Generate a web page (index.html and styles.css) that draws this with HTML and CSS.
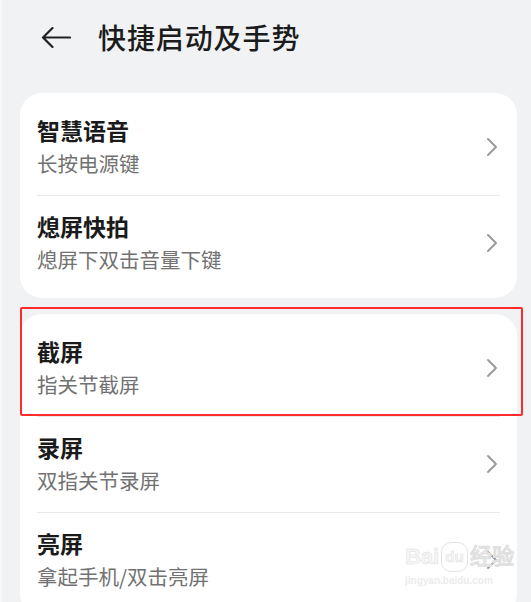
FILE: index.html
```html
<!DOCTYPE html>
<html lang="zh-CN">
<head>
<meta charset="utf-8">
<title>快捷启动及手势</title>
<link rel="stylesheet" href="styles.css">
</head>
<body>
<div class="page">
  <header class="header">
    <svg class="back" width="30" height="21" viewBox="0 0 30 21" aria-hidden="true">
      <path d="M29 10.5H2 M11.5 1L2 10.5L11.5 20" fill="none" stroke="#222" stroke-width="2.2" stroke-linecap="round" stroke-linejoin="round"/>
    </svg>
    <h1 class="title">快捷启动及手势</h1>
  </header>

  <section class="card">
    <div class="row">
      <div class="text">
        <div class="name">智慧语音</div>
        <div class="desc">长按电源键</div>
      </div>
      <svg class="chev" width="12" height="20" viewBox="0 0 12 20" aria-hidden="true"><path d="M2 2L10 10L2 18" fill="none" stroke="#9a9a9a" stroke-width="2" stroke-linecap="round" stroke-linejoin="round"/></svg>
    </div>
    <div class="row">
      <div class="text">
        <div class="name">熄屏快拍</div>
        <div class="desc">熄屏下双击音量下键</div>
      </div>
      <svg class="chev" width="12" height="20" viewBox="0 0 12 20" aria-hidden="true"><path d="M2 2L10 10L2 18" fill="none" stroke="#9a9a9a" stroke-width="2" stroke-linecap="round" stroke-linejoin="round"/></svg>
    </div>
  </section>

  <section class="card card-second">
    <div class="highlight"></div>
    <div class="row">
      <div class="text">
        <div class="name">截屏</div>
        <div class="desc">指关节截屏</div>
      </div>
      <svg class="chev" width="12" height="20" viewBox="0 0 12 20" aria-hidden="true"><path d="M2 2L10 10L2 18" fill="none" stroke="#9a9a9a" stroke-width="2" stroke-linecap="round" stroke-linejoin="round"/></svg>
    </div>
    <div class="row">
      <div class="text">
        <div class="name">录屏</div>
        <div class="desc">双指关节录屏</div>
      </div>
      <svg class="chev" width="12" height="20" viewBox="0 0 12 20" aria-hidden="true"><path d="M2 2L10 10L2 18" fill="none" stroke="#9a9a9a" stroke-width="2" stroke-linecap="round" stroke-linejoin="round"/></svg>
    </div>
    <div class="row">
      <div class="text">
        <div class="name">亮屏</div>
        <div class="desc">拿起手机/双击亮屏</div>
      </div>
      <svg class="chev" width="12" height="20" viewBox="0 0 12 20" aria-hidden="true"><path d="M2 2L10 10L2 18" fill="none" stroke="#9a9a9a" stroke-width="2" stroke-linecap="round" stroke-linejoin="round"/></svg>
    </div>
    <div class="watermark">
      <div class="wm-top"><span>Bai</span><span class="wm-paw">du</span><span>经验</span></div>
      <div class="wm-url">jingyan.baidu.com</div>
    </div>
  </section>
</div>
</body>
</html>
```

FILE: styles.css
```css
html, body {
  margin: 0;
  padding: 0;
}
body {
  background: #f1f2f4;
  font-family: "Noto Sans CJK SC", "Noto Sans", sans-serif;
  overflow: hidden;
}
.page {
  border-left: 2px solid #f8f8f9;
  padding: 0 14px 0 18px;
  height: 602px;
  box-sizing: border-box;
}
.header {
  height: 74px;
  display: flex;
  align-items: center;
  margin-bottom: 19px;
}
.back {
  display: block;
  margin-left: 21px;
  margin-top: 1px;
}
.title {
  margin: 0 0 0 27px;
  font-size: 28px;
  font-weight: 500;
  line-height: 36px;
  letter-spacing: 0.9px;
  color: #1c1c1c;
}
.card {
  background: #ffffff;
  border-radius: 22px;
  padding: 7px 17px;
}
.card-second {
  margin-top: 16px;
  position: relative;
}
.row {
  display: flex;
  align-items: center;
  height: 96px;
  box-sizing: border-box;
  border-bottom: 1px solid #e9e9e9;
}
.row:last-of-type {
  border-bottom: none;
  height: 95px;
}
.card-second .row:first-of-type {
  border-bottom-color: transparent;
}
.text {
  flex: 1;
  padding-top: 5px;
  padding-bottom: 8px;
}
.name {
  font-size: 23px;
  line-height: 28px;
  font-weight: 600;
  color: #1a1a1a;
}
.desc {
  margin-top: 6px;
  font-size: 20.5px;
  line-height: 26px;
  color: #727272;
}
.chev {
  display: block;
  margin-right: 2px;
  margin-top: -2px;
}
.highlight {
  position: absolute;
  top: -7px;
  left: 0;
  width: 503px;
  height: 109px;
  box-sizing: border-box;
  border: 2.5px solid #ff2a2a;
  border-radius: 2px;
  pointer-events: none;
}
.watermark {
  position: absolute;
  left: 385px;
  top: 228px;
  color: #f6f6f6;
  font-family: "Liberation Sans", sans-serif;
  -webkit-text-stroke: 0.5px #e0e0e0;
  pointer-events: none;
}
.wm-top {
  display: flex;
  align-items: center;
  font-size: 22px;
  font-weight: 700;
  line-height: 24px;
}
.wm-paw {
  font-size: 15px;
  margin: 0 2px;
  padding: 2px 3px;
  border: 1.5px solid #e4e4e4;
  border-radius: 10px;
}
.wm-url {
  font-size: 10px;
  line-height: 12px;
  margin-top: 3px;
  font-weight: 700;
  color: #ececec;
  -webkit-text-stroke: 0;
}
```
